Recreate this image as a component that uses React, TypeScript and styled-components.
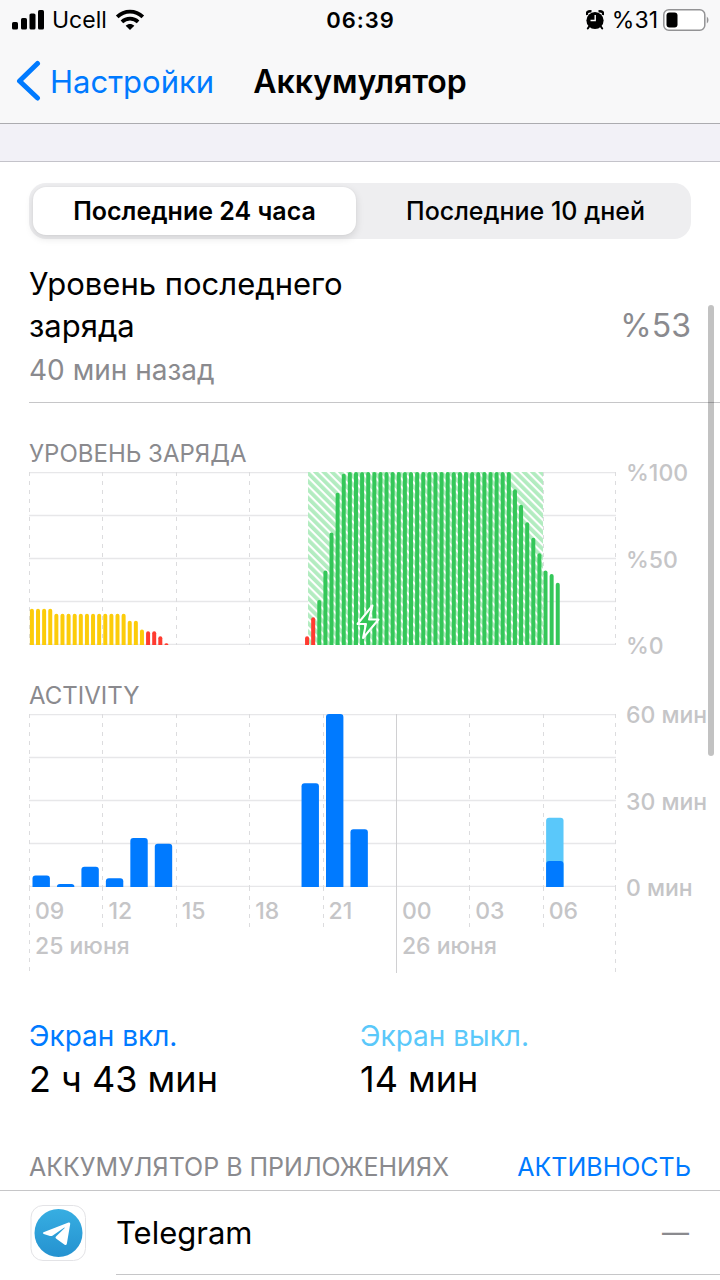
import React from "react";
import styled, { createGlobalStyle } from "styled-components";

const GlobalStyle = createGlobalStyle`
  * { box-sizing: border-box; }
  body { margin: 0; background: #fff; color: #000; font-family: Inter, "Liberation Sans", sans-serif; }
  h1, h2, p, ul { margin: 0; padding: 0; font-weight: 400; }
  button { font-family: inherit; border: 0; background: none; padding: 0; cursor: pointer; }
  svg { display: block; }
`;

const Screen = styled.div`
  position: relative;
  min-height: 100vh;
  overflow: hidden;
`;

const TopBar = styled.header`
  height: 124px;
  background: #f8f8f9;
  border-bottom: 1px solid #acacb0;
`;

const StatusBar = styled.div`
  display: grid;
  grid-template-columns: 1fr auto 1fr;
  align-items: center;
  height: 40px;
  padding: 0 11px 0 12px;
  font-size: 23px;
`;

const StatusGroup = styled.div<{ $end?: boolean }>`
  display: flex;
  align-items: center;
  gap: 8px;
  justify-content: ${(p) => (p.$end ? "flex-end" : "flex-start")};
`;

const BatteryLevel = styled.span`
  display: flex;
  align-items: center;
  gap: 5px;
`;

const Clock = styled.time`
  font-weight: 600;
  font-size: 22px;
  letter-spacing: 1px;
`;

const NavBar = styled.nav`
  display: grid;
  grid-template-columns: 1fr auto 1fr;
  align-items: center;
  height: 82px;
  padding: 0 16px;
`;

const BackLink = styled.a`
  display: flex;
  align-items: center;
  gap: 8px;
  color: #007aff;
  font-size: 31px;
  text-decoration: none;
`;

const Title = styled.h1`
  && { font-weight: 600; }
  font-size: 32px;
`;

const Spacer = styled.div`
  height: 38px;
  background: #f2f1f7;
  border-bottom: 1px solid #c4c3ca;
`;

const Segments = styled.div`
  display: flex;
  gap: 8px;
  height: 56px;
  margin: 21px 29px 0;
  padding: 4px;
  border-radius: 17px;
  background: #eeeef0;
`;

const Segment = styled.button<{ $active?: boolean }>`
  flex: 1;
  border-radius: 13px;
  color: #000;
  font-size: 25px;
  font-weight: ${(p) => (p.$active ? 600 : 500)};
  && { background: ${(p) => (p.$active ? "#fff" : "transparent")}; }
  box-shadow: ${(p) => (p.$active ? "0 3px 8px rgba(0,0,0,.12), 0 0 2px rgba(0,0,0,.06)" : "none")};
`;

const LastCharge = styled.section`
  display: flex;
  align-items: center;
  justify-content: space-between;
  margin-left: 29px;
  padding: 24px 29px 9px 0;
  border-bottom: 1px solid #c6c6c8;
`;

const LastChargeText = styled.div`
  max-width: 340px;
`;

const LastChargeTitle = styled.h2`
  font-size: 31px;
  line-height: 42px;
`;

const LastChargeTime = styled.p`
  color: #8a8a8e;
  font-size: 28px;
  line-height: 46px;
`;

const LastChargeValue = styled.span`
  padding-bottom: 6px;
  color: #8a8a8e;
  font-size: 32px;
`;

const Charts = styled.section`
  display: flex;
  flex-direction: column;
  gap: 18px;
  padding: 33px 0 0 29px;
`;

const Caption = styled.h2<{ $large?: boolean }>`
  color: #8a8a8e;
  font-size: ${(p) => (p.$large ? "25px" : "24px")};
  line-height: 36px;
`;

const ChartRow = styled.div`
  display: grid;
  grid-template-columns: 1fr 104px;
`;

const Plot = styled.div`
  display: flex;
  flex-direction: column;
`;

const Scale = styled.div`
  display: flex;
  flex-direction: column;
  justify-content: space-between;
  height: 201px;
  margin-top: -13px;
  padding-left: 10px;
  color: #c5c5c7;
  font-size: 23px;
  font-weight: 500;
  line-height: 28px;
  white-space: nowrap;
`;

const HourRow = styled.div`
  display: grid;
  grid-template-columns: repeat(8, 1fr);
`;

const tick = "repeating-linear-gradient(#dcdcde 0 4px, transparent 4px 9px)";

const Hour = styled.span<{ $solid?: boolean }>`
  height: 44px;
  padding-left: 6px;
  background: ${(p) => (p.$solid ? "linear-gradient(#d0d0d2, #d0d0d2)" : tick)} left top / 1px 100% no-repeat;
  color: #c5c5c7;
  font-size: 23px;
  font-weight: 500;
  line-height: 48px;
`;

const DayRow = styled(HourRow)`
  grid-template-columns: 5fr 3fr;
`;

const Day = styled(Hour)`
  height: 42px;
  line-height: 30px;
`;

const AxisFoot = styled.div`
  background: ${tick} right top / 1px 100% no-repeat;
`;

const Totals = styled.section`
  display: grid;
  grid-template-columns: 1fr 1fr;
  padding: 44px 29px 0;
`;

const TotalLabel = styled.p<{ $off?: boolean }>`
  color: ${(p) => (p.$off ? "#5ac8fa" : "#007aff")};
  font-size: 28px;
  line-height: 38px;
`;

const TotalValue = styled.p`
  font-size: 36px;
  line-height: 48px;
`;

const AppsHeader = styled.header`
  display: flex;
  align-items: center;
  justify-content: space-between;
  margin-top: 40px;
  padding: 0 29px;
  height: 48px;
  border-bottom: 1px solid #c6c6c8;
`;

const AppsToggle = styled.button`
  color: #007aff;
  font-size: 25px;
`;

const AppList = styled.ul`
  list-style: none;
`;

const AppItem = styled.li`
  display: flex;
  align-items: center;
  gap: 30px;
  padding-left: 30px;
`;

const AppBody = styled.div`
  flex: 1;
  display: flex;
  align-items: center;
  justify-content: space-between;
  height: 84px;
  padding-right: 31px;
  border-bottom: 1px solid #c6c6c8;
  font-size: 31px;
`;

const AppUsage = styled.span`
  color: #8a8a8e;
  font-size: 27px;
`;

const ScrollThumb = styled.div`
  position: absolute;
  top: 305px;
  right: 6px;
  width: 6px;
  height: 451px;
  border-radius: 3px;
  background: rgba(0, 0, 0, 0.24);
`;

const PLOT_W = 587;
const PLOT_H = 173;

const levels: (number | null)[] = [
  ...Array(4).fill(21),
  ...Array(12).fill(18),
  14, 14, 9, 8, 8, 5, 1,
  ...Array(22).fill(null),
  5, 16, 26, 43, 65, 88, 99,
  ...Array(27).fill(100),
  90, 81, 71, 62, 53, 43, 41, 36,
];

const levelColor = (level: number, i: number) =>
  i < 19 ? "#fccc0a" : level <= 16 ? "#ff3b30" : "#34c759";

const activity = [
  { hour: 0, on: 4 },
  { hour: 1, on: 1 },
  { hour: 2, on: 7 },
  { hour: 3, on: 3 },
  { hour: 4, on: 17 },
  { hour: 5, on: 15 },
  { hour: 11, on: 36 },
  { hour: 12, on: 60 },
  { hour: 13, on: 20 },
  { hour: 21, on: 9, total: 24 },
];

function roundedTop(x: number, w: number, h: number, r: number) {
  const k = Math.min(r, h);
  const y = PLOT_H - h;
  return `M${x} ${PLOT_H}V${y + k}Q${x} ${y} ${x + k} ${y}H${x + w - k}Q${x + w} ${y} ${x + w} ${y + k}V${PLOT_H}Z`;
}

function Grid() {
  return (
    <g>
      {[0, 1, 2, 3, 4].map((n) => (
        <line key={n} x1={0} x2={PLOT_W} y1={n * 43 + 0.5} y2={n * 43 + 0.5} stroke="#e7e7e9" strokeWidth={1.5} />
      ))}
      {[0, 1, 2, 3, 4, 5, 6, 7, 8].map((n) => {
        const x = Math.min(Math.round((n * PLOT_W) / 8) + 0.5, PLOT_W - 0.5);
        const midnight = n === 5;
        return (
          <line
            key={n}
            x1={x}
            x2={x}
            y1={0}
            y2={PLOT_H}
            stroke={midnight ? "#d0d0d2" : "#dcdcde"}
            strokeDasharray={midnight ? undefined : "4 5"}
          />
        );
      })}
    </g>
  );
}

function LevelChart() {
  return (
    <svg width="100%" height={PLOT_H} viewBox={`0 0 ${PLOT_W} ${PLOT_H}`} preserveAspectRatio="none" role="img" aria-label="Уровень заряда">
      <defs>
        <pattern id="hatch" width="5.9" height="5.9" patternUnits="userSpaceOnUse" patternTransform="rotate(-45)">
          <rect width="3.8" height="5.9" fill="#b2ecc0" />
        </pattern>
      </defs>
      <Grid />
      <rect x={279} y={0} width={235} height={PLOT_H} fill="#fff" />
      <rect x={279} y={0} width={235} height={PLOT_H} fill="url(#hatch)" />
      {levels.map((level, i) =>
        level === null ? null : (
          <path key={i} d={roundedTop(0.9 + (i * PLOT_W) / 96, 4, (level / 100) * PLOT_H, 2)} fill={levelColor(level, i)} />
        )
      )}
      <path d="M343.500 133.500L328.500 152H337L334 166L349.500 147.500H340Z" fill="#34c759" stroke="#fff" strokeWidth={2} strokeLinejoin="round" />
    </svg>
  );
}

function ActivityChart() {
  return (
    <svg width="100%" height={PLOT_H} viewBox={`0 0 ${PLOT_W} ${PLOT_H}`} preserveAspectRatio="none" role="img" aria-label="Activity">
      <Grid />
      {activity.map(({ hour, on, total }) => {
        const x = 3.5 + (hour * PLOT_W) / 24;
        return (
          <g key={hour}>
            {total && <path d={roundedTop(x, 17.4, (total / 60) * PLOT_H, 3)} fill="#5ac8fa" />}
            <path d={roundedTop(x, 17.4, (on / 60) * PLOT_H, 3)} fill="#007aff" />
          </g>
        );
      })}
    </svg>
  );
}

const SignalIcon = () => (
  <svg width="32" height="20" viewBox="0 0 32 20">
    <rect x="0" y="12" width="6" height="7.500" rx="1.600" />
    <rect x="9" y="8" width="6" height="11.500" rx="1.600" />
    <rect x="17.500" y="3.500" width="6" height="16" rx="1.600" />
    <rect x="26" y="0" width="6" height="19.500" rx="1.600" />
  </svg>
);

const WifiIcon = () => (
  <svg width="30" height="22" viewBox="0 0 30 22" fill="none" stroke="#000" strokeWidth="3.800">
    <path d="M2.200 7.800C9.500 .8 20.500 .8 27.800 7.800" />
    <path d="M6.900 12.800C11.500 8.500 18.500 8.500 23.100 12.800" />
    <path d="M15 21L10.700 16.700C13.200 14.500 16.800 14.500 19.300 16.700Z" fill="#000" stroke="none" />
  </svg>
);

const AlarmIcon = () => (
  <svg width="18" height="20" viewBox="0 0 18 20">
    <circle cx="9" cy="10.500" r="8.600" />
    <path d="M1 5C.2 2.500 2 .8 5.500 1.400M17 5C17.800 2.500 16 .8 12.500 1.400" fill="none" stroke="#000" strokeWidth="2.400" />
    <path d="M3.500 16L1.800 18.500M14.500 16L16.200 18.500" stroke="#000" strokeWidth="2" strokeLinecap="round" />
    <path d="M9.200 5V10.500H4.500" fill="none" stroke="#fff" strokeWidth="1.400" />
  </svg>
);

const BatteryIcon = () => (
  <svg width="46" height="22" viewBox="0 0 46 22">
    <rect x=".8" y=".8" width="41" height="20.400" rx="5" fill="#fff" stroke="#939395" strokeWidth="1.500" />
    <rect x="3.500" y="3.500" width="11" height="15" rx="3" />
    <path d="M43.800 7.500Q45.500 8.500 45.500 11T43.800 14.500Z" fill="#939395" />
  </svg>
);

const ChevronIcon = () => (
  <svg width="26" height="42" viewBox="0 0 26 42" fill="none" stroke="#007aff" strokeWidth="5" strokeLinecap="round" strokeLinejoin="round">
    <path d="M21.500 3.500L3.500 21L21.500 38" />
  </svg>
);

const TelegramIcon = () => (
  <svg width="56" height="56" viewBox="0 0 56 56">
    <defs>
      <linearGradient id="sky" x1="0" y1="0" x2="0" y2="1">
        <stop offset="0" stopColor="#37aee2" />
        <stop offset="1" stopColor="#2592d0" />
      </linearGradient>
    </defs>
    <rect x="1" y=".5" width="54.500" height="55" rx="12" fill="#fff" stroke="#e3e3e6" />
    <circle cx="28.500" cy="28" r="24" fill="url(#sky)" />
    <path d="M13.500 27.200L38.500 17.500Q40.500 17 40.200 19L36.900 38.500Q36.400 41 34.300 39.600L26 33.500Q24.900 32.500 26 31.500L34.700 22.900Q35 22.200 34 22.700L22.800 30.500Q21.500 31.300 20 30.900L13.700 28.900Q12 28 13.500 27.200Z" fill="#fff" />
  </svg>
);

const hours = ["09", "12", "15", "18", "21", "00", "03", "06"];

export default function App() {
  return (
    <Screen>
      <GlobalStyle />
      <TopBar>
        <StatusBar>
          <StatusGroup>
            <SignalIcon />
            <span>Ucell</span>
            <WifiIcon />
          </StatusGroup>
          <Clock>06:39</Clock>
          <StatusGroup $end>
            <AlarmIcon />
            <BatteryLevel>
              <span>%31</span>
              <BatteryIcon />
            </BatteryLevel>
          </StatusGroup>
        </StatusBar>
        <NavBar>
          <BackLink href="#settings">
            <ChevronIcon />
            Настройки
          </BackLink>
          <Title>Аккумулятор</Title>
        </NavBar>
      </TopBar>
      <Spacer />
      <main>
        <Segments>
          <Segment $active aria-pressed="true">Последние 24 часа</Segment>
          <Segment aria-pressed="false">Последние 10 дней</Segment>
        </Segments>
        <LastCharge>
          <LastChargeText>
            <LastChargeTitle>Уровень последнего заряда</LastChargeTitle>
            <LastChargeTime>40 мин назад</LastChargeTime>
          </LastChargeText>
          <LastChargeValue>%53</LastChargeValue>
        </LastCharge>
        <Charts>
          <div>
            <Caption>УРОВЕНЬ ЗАРЯДА</Caption>
            <ChartRow>
              <Plot>
                <LevelChart />
              </Plot>
              <Scale>
                <span>%100</span>
                <span>%50</span>
                <span>%0</span>
              </Scale>
            </ChartRow>
          </div>
          <div>
            <Caption>ACTIVITY</Caption>
            <ChartRow>
              <Plot>
                <ActivityChart />
                <AxisFoot>
                  <HourRow>
                    {hours.map((h) => (
                      <Hour key={h} $solid={h === "00"}>{h}</Hour>
                    ))}
                  </HourRow>
                  <DayRow>
                    <Day>25 июня</Day>
                    <Day $solid>26 июня</Day>
                  </DayRow>
                </AxisFoot>
              </Plot>
              <Scale>
                <span>60 мин</span>
                <span>30 мин</span>
                <span>0 мин</span>
              </Scale>
            </ChartRow>
          </div>
        </Charts>
        <Totals>
          <div>
            <TotalLabel>Экран вкл.</TotalLabel>
            <TotalValue>2 ч 43 мин</TotalValue>
          </div>
          <div>
            <TotalLabel $off>Экран выкл.</TotalLabel>
            <TotalValue>14 мин</TotalValue>
          </div>
        </Totals>
        <AppsHeader>
          <Caption $large>АККУМУЛЯТОР В ПРИЛОЖЕНИЯХ</Caption>
          <AppsToggle>АКТИВНОСТЬ</AppsToggle>
        </AppsHeader>
        <AppList>
          <AppItem>
            <TelegramIcon />
            <AppBody>
              <span>Telegram</span>
              <AppUsage>—</AppUsage>
            </AppBody>
          </AppItem>
        </AppList>
      </main>
      <ScrollThumb />
    </Screen>
  );
}
